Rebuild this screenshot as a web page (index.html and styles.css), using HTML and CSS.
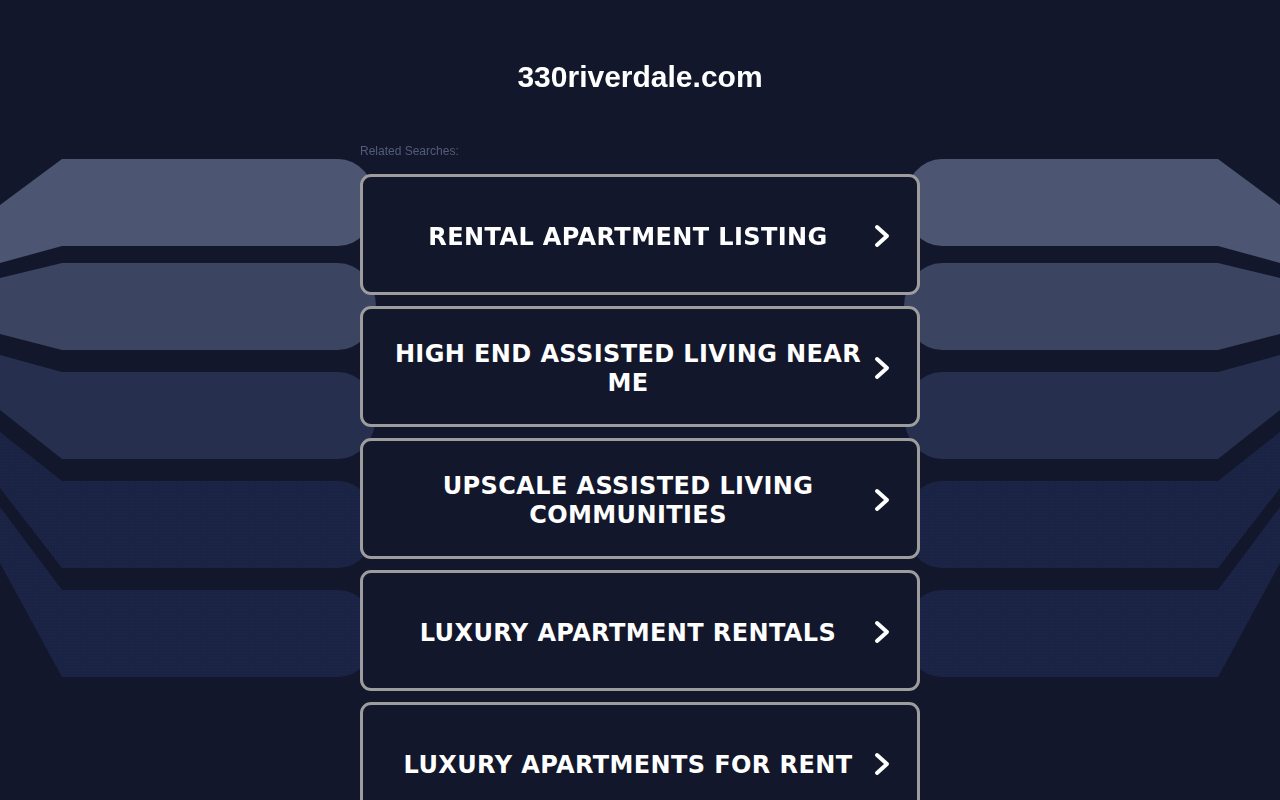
FILE: index.html
```html
<!DOCTYPE html>
<html lang="en">
<head>
<meta charset="utf-8">
<title>330riverdale.com</title>
<link rel="stylesheet" href="styles.css">
</head>
<body>
<svg class="backdrop" width="1280" height="800" viewBox="0 0 1280 800" aria-hidden="true">
  <defs>
    <pattern id="dots" width="3" height="3" patternUnits="userSpaceOnUse">
      <rect width="3" height="3" fill="#1b2345"/>
      <rect x="1" y="1" width="1" height="1" fill="#1f284c"/>
    </pattern>
    <g id="bands">
      <path fill="#4c5673" d="M0 205 L62 159 L338 159 A38 43.5 0 0 1 338 246 L62 246 L0 263 Z"/>
      <path fill="#3b4461" d="M0 278 L62 263 L338 263 A38 43.5 0 0 1 338 350 L62 350 L0 334 Z"/>
      <path fill="#262f4e" d="M0 355 L62 372 L338 372 A38 43.5 0 0 1 338 459 L62 459 L0 410 Z"/>
      <path fill="url(#dots)" d="M0 432 L62 481 L338 481 A38 43.5 0 0 1 338 568 L62 568 L0 488 Z"/>
      <path fill="url(#dots)" d="M0 507 L62 590 L338 590 A38 43.5 0 0 1 338 677 L62 677 L0 563 Z"/>
    </g>
  </defs>
  <use href="#bands"/>
  <use href="#bands" transform="translate(1280 0) scale(-1 1)"/>
</svg>

<main class="page">
  <h1 class="domain">330riverdale.com</h1>
  <p class="related">Related Searches:</p>
  <ul class="links">
    <li><a class="card" href="#"><span class="label">RENTAL APARTMENT LISTING</span><svg class="chev" viewBox="0 0 18 26"><path d="M4 4 L14 13 L4 22"/></svg></a></li>
    <li><a class="card" href="#"><span class="label">HIGH END ASSISTED LIVING NEAR ME</span><svg class="chev" viewBox="0 0 18 26"><path d="M4 4 L14 13 L4 22"/></svg></a></li>
    <li><a class="card" href="#"><span class="label">UPSCALE ASSISTED LIVING COMMUNITIES</span><svg class="chev" viewBox="0 0 18 26"><path d="M4 4 L14 13 L4 22"/></svg></a></li>
    <li><a class="card" href="#"><span class="label">LUXURY APARTMENT RENTALS</span><svg class="chev" viewBox="0 0 18 26"><path d="M4 4 L14 13 L4 22"/></svg></a></li>
    <li><a class="card" href="#"><span class="label">LUXURY APARTMENTS FOR RENT</span><svg class="chev" viewBox="0 0 18 26"><path d="M4 4 L14 13 L4 22"/></svg></a></li>
  </ul>
</main>
</body>
</html>
```

FILE: styles.css
```css
html, body {
  margin: 0;
  padding: 0;
  background: #12172b;
  overflow: hidden;
}

body {
  font-family: "Liberation Sans", Arial, sans-serif;
  color: #fff;
}

.backdrop {
  position: fixed;
  left: 0;
  top: 0;
  z-index: 0;
}

.page {
  position: relative;
  z-index: 1;
  width: 560px;
  margin: 0 auto;
  padding-top: 59px;
}

.domain {
  margin: 0;
  font-family: "Liberation Sans", Arial, sans-serif;
  font-weight: bold;
  font-size: 30px;
  line-height: 36px;
  text-align: center;
  color: #fff;
}

.related {
  margin: 49px 0 0;
  font-size: 12px;
  line-height: 14px;
  color: #535d7b;
}

.links {
  list-style: none;
  margin: 16px 0 0;
  padding: 0;
  display: flex;
  flex-direction: column;
  gap: 11px;
}

.card {
  box-sizing: border-box;
  height: 121px;
  display: flex;
  align-items: center;
  border: 3px solid #9d9d9d;
  border-radius: 11px;
  background: #12172b;
  text-decoration: none;
  color: #fff;
}

.label {
  flex: 1;
  padding-left: 20px;
  text-align: center;
  font-family: "DejaVu Sans", Verdana, sans-serif;
  font-weight: bold;
  font-size: 24px;
  line-height: 29px;
  letter-spacing: 0.4px;
  margin-top: 5px;
}

.chev {
  width: 18px;
  height: 26px;
  margin-right: 26px;
  margin-top: 3px;
  flex: none;
}

.chev path {
  fill: none;
  stroke: #fff;
  stroke-width: 4;
  stroke-linecap: round;
  stroke-linejoin: round;
}
```
